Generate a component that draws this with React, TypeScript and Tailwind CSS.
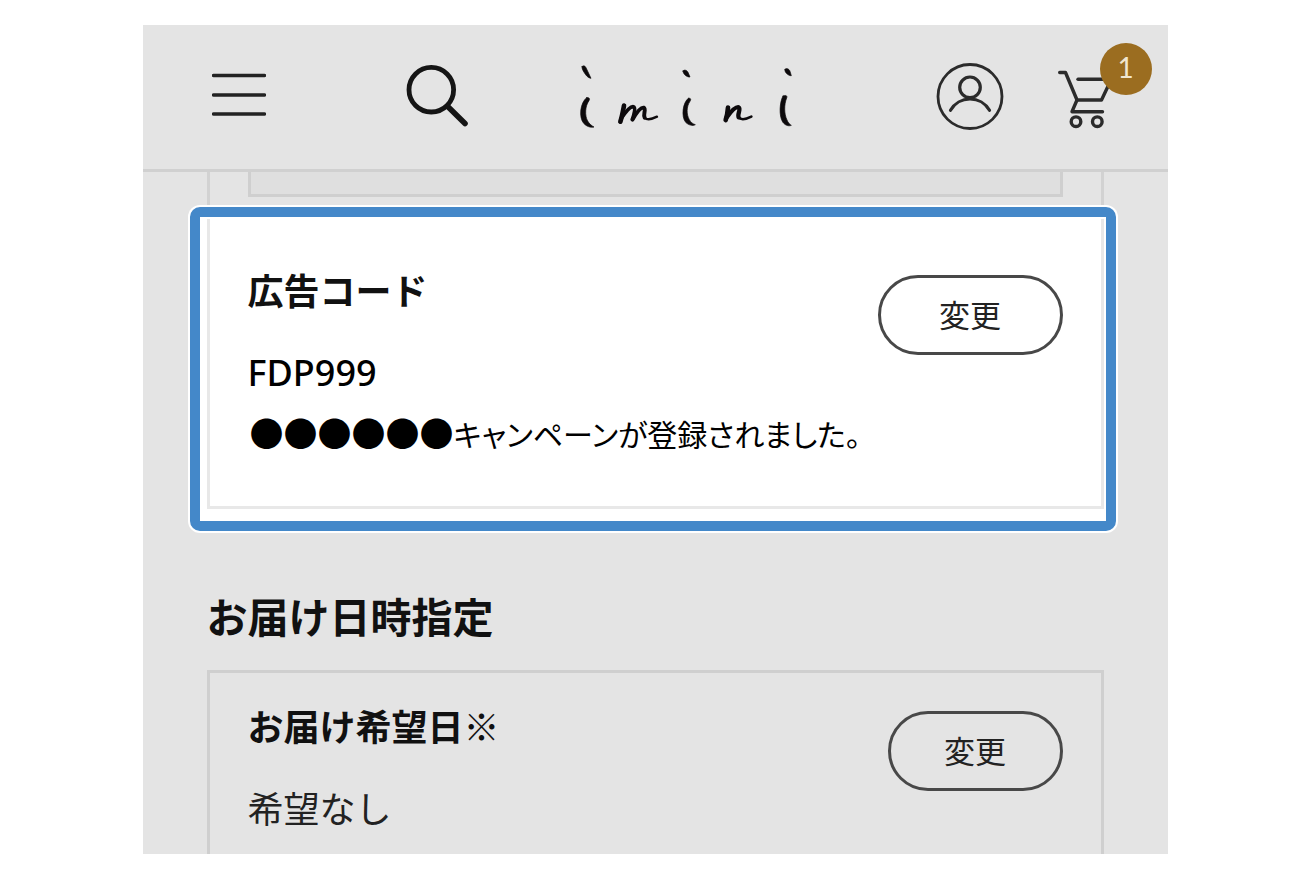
import type { ReactNode } from "react";

function MenuIcon() {
  return (
    <svg width="54" height="68" viewBox="0 0 54 68" fill="none" stroke="#222222" strokeWidth="3.4" strokeLinecap="round" aria-hidden="true">
      <path d="M1.5 12.5H52.5M1.5 32H52.5M1.5 51H52.5" />
    </svg>
  );
}

function SearchIcon() {
  return (
    <svg width="64" height="68" viewBox="0 0 64 68" fill="none" stroke="#151515" strokeLinecap="round" aria-hidden="true">
      <circle cx="26.3" cy="26.7" r="22.3" strokeWidth="4.8" />
      <path d="M43 43.7L60 60.5" strokeWidth="5.6" />
    </svg>
  );
}

function Logo() {
  return (
    <svg width="217" height="68" viewBox="50 38 651 204" fill="none" stroke="#0d0a0c" strokeLinecap="round" strokeLinejoin="round" aria-hidden="true">
      <g fill="#0d0a0c" strokeWidth="2">
        <path d="M65 49C68 45 74 46 77 52L92 84C86 83 80 79 76 73C71 66 64 56 65 49Z" />
        <path d="M79 142C86 141 90 145 86 151C74 167 73 196 82 212C87 221 94 226 101 230C91 233 78 228 70 219C55 201 59 157 79 142Z" />
        <path d="M368 62C371 57 379 59 383 66L389 80C380 81 368 72 368 62Z" />
        <path d="M384 144C391 142 393 147 389 153C378 169 378 192 387 208C391 216 398 221 405 223C397 228 384 224 376 216C362 199 367 156 384 144Z" />
        <path d="M674 57C678 52 687 56 689 63L693 76C685 77 671 66 674 57Z" />
        <path d="M668 137C676 133 682 136 679 143C671 163 671 190 680 209C683 217 688 222 693 225C684 229 673 224 667 215C655 196 658 154 668 137Z" />
      </g>
      <path d="M191 166C188 182 185 199 180 214" strokeWidth="14" />
      <path d="M183 204C195 186 210 167 219 169C227 172 221 192 216 208" strokeWidth="11" />
      <path d="M217 207C228 188 240 170 250 172C259 176 247 193 253 202" strokeWidth="12" />
      <path d="M253 202C261 211 278 205 290 199" strokeWidth="7" />
      <path d="M503 172C502 186 500 197 496 209" strokeWidth="14" />
      <path d="M499 201C511 185 526 168 535 171C543 175 530 193 535 201" strokeWidth="13" />
      <path d="M535 201C543 212 561 205 573 199" strokeWidth="8" />
    </svg>
  );
}

function AccountIcon() {
  return (
    <svg width="68" height="68" viewBox="0 0 68 68" fill="none" stroke="#2b2b2b" strokeWidth="2.8" strokeLinecap="round" aria-hidden="true">
      <circle cx="34" cy="33.5" r="32" />
      <circle cx="34" cy="24.3" r="10.3" strokeWidth="3.2" />
      <path d="M14.5 47.3A22.5 22.5 0 0 1 53.5 47.3" strokeWidth="3.2" />
    </svg>
  );
}

function CartIcon() {
  return (
    <svg width="54" height="68" viewBox="0 0 54 68" fill="none" stroke="#2b2b2b" strokeWidth="3.4" strokeLinecap="round" strokeLinejoin="round" aria-hidden="true">
      <path d="M1.7 9.5H7.5L19 37H43.5L53 17" />
      <path d="M20 16.3H53" />
      <path d="M19 37L14 48.7H44.5" />
      <circle cx="18" cy="58.7" r="4.8" />
      <circle cx="39.3" cy="58.7" r="4.8" />
    </svg>
  );
}

function ChangeButton({ wide, label }: { wide?: boolean; label: string }) {
  return (
    <button
      type="button"
      aria-label={label}
      className={
        "mt-2 h-20 shrink-0 rounded-full border-3 border-[#484848] pb-0.5 text-[31px] text-[#222222] " +
        (wide ? "w-[185px]" : "w-[175px]")
      }
    >
      変更
    </button>
  );
}

function Row({ title, children, action }: { title: ReactNode; children: ReactNode; action: ReactNode }) {
  return (
    <div className="flex items-start justify-between">
      <div>
        <h3 className="text-4xl leading-11 font-bold text-[#111111]">{title}</h3>
        <div className="mt-8">{children}</div>
      </div>
      {action}
    </div>
  );
}

export default function App() {
  return (
    <div className="bg-white px-4 py-[25px] font-['Noto_Sans_CJK_JP',sans-serif]">
      <div className="mx-auto max-w-[1025px] bg-[#e4e4e4]">
        <header className="flex items-center border-b-3 border-[#d0d0d0] py-[38px] pr-[56px] pl-[69px]">
          <button type="button" aria-label="メニュー">
            <MenuIcon />
          </button>
          <button type="button" aria-label="検索" className="ml-[139px]">
            <SearchIcon />
          </button>
          <a href="#" aria-label="imini" className="ml-[108px]">
            <Logo />
          </a>
          <a href="#" aria-label="マイページ" className="ml-auto">
            <AccountIcon />
          </a>
          <a href="#" aria-label="カート" className="relative ml-[54px]">
            <CartIcon />
            <span className="absolute -top-5 left-[42px] flex size-[52px] items-center justify-center rounded-full bg-[#9b6d20] pb-1 font-['Lato',sans-serif] text-[28px] text-[#f0e6d0]">
              1
            </span>
          </a>
        </header>

        <main>
          <div className="mx-16 border-x-3 border-[#d2d2d2] px-[38px] pb-[10px]">
            <div className="h-[25px] border-3 border-t-0 border-[#cfcfcf] bg-[#dfdfdf]" />
          </div>

          <section className="relative mr-[52px] ml-[47px] rounded-[10px] border-10 border-[#4488c9] bg-white pt-0.5 pr-0.5 pb-3 pl-[7px] ring-2 ring-white">
            <div className="border-3 border-t-0 border-[#e8e8e8] pt-12 pr-[38px] pb-[43px] pl-[38px]">
              <Row title="広告コード" action={<ChangeButton wide label="広告コードを変更" />}>
                <p className="font-['Noto_Sans',sans-serif] text-4xl leading-[60px] font-medium text-black">FDP999</p>
                <p className="flex items-center pl-0.5 text-[30px] leading-[60px] text-black [font-feature-settings:'palt']">
                  <span className="text-[34px]">●●●●●●</span>
                  <span>キャンペーンが登録されました。</span>
                </p>
              </Row>
            </div>
          </section>

          <section className="px-16 pt-[57px]">
            <h2 className="text-[41px] leading-[54px] font-bold text-[#111111]">お届け日時指定</h2>
            <div className="mt-7 border-3 border-b-0 border-[#cfcfcf] px-[38px] pt-[30px] pb-[19px]">
              <Row
                title={
                  <>
                    お届け希望日<span className="font-normal">※</span>
                  </>
                }
                action={<ChangeButton label="お届け希望日を変更" />}
              >
                <p className="text-4xl leading-14 text-[#222222]">希望なし</p>
              </Row>
            </div>
          </section>
        </main>
      </div>
    </div>
  );
}
